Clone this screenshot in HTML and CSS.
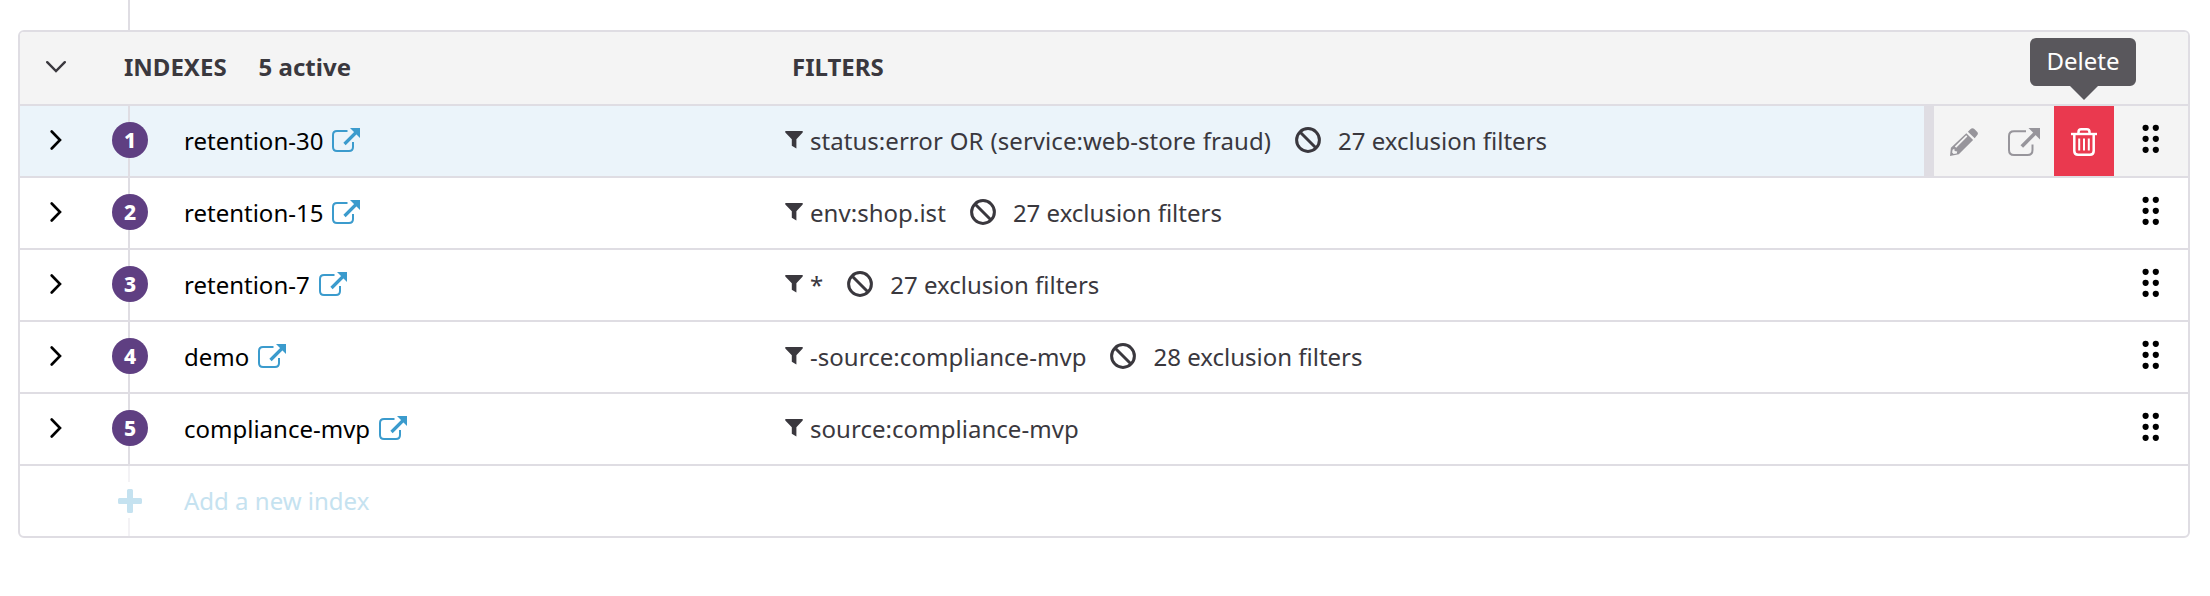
FILE: index.html
```html
<!DOCTYPE html>
<html lang="en">
<head>
<meta charset="utf-8">
<title>Indexes</title>
<link rel="stylesheet" href="styles.css">
</head>
<body>
<svg class="sprite" aria-hidden="true">
  <symbol id="chevron" viewBox="0 0 12 20"><path d="M1.700 1.500 10 10 1.700 18.500" fill="none" stroke="currentColor" stroke-width="2.600" stroke-linecap="round" stroke-linejoin="miter"/></symbol>
  <symbol id="chevron-down" viewBox="0 0 20 12"><path d="M1.200 1.200 10 10 18.800 1.200" fill="none" stroke="currentColor" stroke-width="2.400" stroke-linecap="round"/></symbol>
  <symbol id="external" viewBox="0 0 28 24"><path d="M15.500 3H5Q1 3 1 7V19Q1 23 5 23H17Q21 23 21 19V14" fill="none" stroke="currentColor" stroke-width="2"/><path d="M12.500 16 24 4.500" fill="none" stroke="currentColor" stroke-width="3.200"/><path d="M18 0H28V10Z" fill="currentColor"/></symbol>
  <symbol id="external-lg" viewBox="0 0 32 28"><path d="M18 3.200H6Q1 3.200 1 8V22Q1 27 6 27H19.500Q24.500 27 24.500 22V16.500" fill="none" stroke="currentColor" stroke-width="2"/><path d="M13.800 18.500 27 5.300" fill="none" stroke="currentColor" stroke-width="3.600"/><path d="M20.500 0H32V11.500Z" fill="currentColor"/></symbol>
  <symbol id="funnel" viewBox="0 0 18 18"><path d="M0.300 0H17.700V1.400L11.400 8.300V17.600L6.800 14.700V8.300L0.300 1.400Z" fill="currentColor"/></symbol>
  <symbol id="ban" viewBox="0 0 26 26"><circle cx="13" cy="13" r="11.400" fill="none" stroke="currentColor" stroke-width="3"/><path d="M5 5 21 21" stroke="currentColor" stroke-width="3"/></symbol>
  <symbol id="dots" viewBox="0 0 18 30"><g fill="currentColor"><circle cx="3.600" cy="3.800" r="3.100"/><circle cx="13.800" cy="3.800" r="3.100"/><circle cx="3.600" cy="14.800" r="3.100"/><circle cx="13.800" cy="14.800" r="3.100"/><circle cx="3.600" cy="25.800" r="3.100"/><circle cx="13.800" cy="25.800" r="3.100"/></g></symbol>
  <symbol id="pencil" viewBox="0 0 28 28"><path d="M17.900 3.800 20.400 1.300Q22.400-.7 24.600 1.200L26.800 3.400Q29 5.600 26.900 7.600L24.700 10.200Z" fill="currentColor"/><path fill-rule="evenodd" d="M16.300 5.200 23.100 11.900 8.800 26.300 0 28 .9 19.800ZM4.800 18.400 6.200 19.700 17.400 8.600 16.200 7.300ZM2.600 21.700 2.100 24.600 3.600 26 6.800 25.400 7.200 23.400 4.700 23.100 4.300 20.700Z" fill="currentColor"/></symbol>
  <symbol id="trash" viewBox="0 0 26 28"><g fill="none" stroke="currentColor"><path d="M0 6H26" stroke-width="2.400"/><path d="M7.500 6V4Q7.500 1.300 10.200 1.300H15.800Q18.500 1.300 18.500 4V6M3.300 6V23Q3.300 26.700 7 26.700H19Q22.700 26.700 22.700 23V6" stroke-width="2.500"/><path d="M8.200 10.500V22.500M13 10.500V22.500M17.800 10.500V22.500" stroke-width="2"/></g></symbol>
  <symbol id="plus" viewBox="0 0 24 24"><path d="M10.500 0H13.500Q15 0 15 1.500V9H22.500Q24 9 24 10.500V13.500Q24 15 22.500 15H15V22.500Q15 24 13.500 24H10.500Q9 24 9 22.500V15H1.500Q0 15 0 13.500V10.500Q0 9 1.500 9H9V1.500Q9 0 10.500 0Z" fill="currentColor"/></symbol>
</svg>

<div class="connector"></div>
<main class="panel">
  <header class="row head">
    <svg class="chevron-down"><use href="#chevron-down"/></svg>
    <div class="title"><span>INDEXES</span><span>5 active</span></div>
    <div class="filters-title">FILTERS</div>
  </header>

  <div class="row item selected">
    <svg class="chevron"><use href="#chevron"/></svg>
    <div class="order"><span class="badge">1</span></div>
    <div class="name">retention-30<svg class="external"><use href="#external"/></svg></div>
    <div class="filters"><svg class="funnel"><use href="#funnel"/></svg><span class="query">status:error OR (service:web-store fraud)</span><svg class="ban"><use href="#ban"/></svg><span>27 exclusion filters</span></div>
    <div class="actions">
      <button class="action"><svg class="pencil"><use href="#pencil"/></svg></button>
      <button class="action"><svg class="external-lg"><use href="#external-lg"/></svg></button>
      <button class="action delete"><svg class="trash"><use href="#trash"/></svg><span class="tooltip">Delete</span></button>
      <svg class="dots"><use href="#dots"/></svg>
    </div>
  </div>

  <div class="row item">
    <svg class="chevron"><use href="#chevron"/></svg>
    <div class="order"><span class="badge">2</span></div>
    <div class="name">retention-15<svg class="external"><use href="#external"/></svg></div>
    <div class="filters"><svg class="funnel"><use href="#funnel"/></svg><span class="query">env:shop.ist</span><svg class="ban"><use href="#ban"/></svg><span>27 exclusion filters</span></div>
    <svg class="dots"><use href="#dots"/></svg>
  </div>

  <div class="row item">
    <svg class="chevron"><use href="#chevron"/></svg>
    <div class="order"><span class="badge">3</span></div>
    <div class="name">retention-7<svg class="external"><use href="#external"/></svg></div>
    <div class="filters"><svg class="funnel"><use href="#funnel"/></svg><span class="query">*</span><svg class="ban"><use href="#ban"/></svg><span>27 exclusion filters</span></div>
    <svg class="dots"><use href="#dots"/></svg>
  </div>

  <div class="row item">
    <svg class="chevron"><use href="#chevron"/></svg>
    <div class="order"><span class="badge">4</span></div>
    <div class="name">demo<svg class="external"><use href="#external"/></svg></div>
    <div class="filters"><svg class="funnel"><use href="#funnel"/></svg><span class="query">-source:compliance-mvp</span><svg class="ban"><use href="#ban"/></svg><span>28 exclusion filters</span></div>
    <svg class="dots"><use href="#dots"/></svg>
  </div>

  <div class="row item">
    <svg class="chevron"><use href="#chevron"/></svg>
    <div class="order"><span class="badge">5</span></div>
    <div class="name">compliance-mvp<svg class="external"><use href="#external"/></svg></div>
    <div class="filters"><svg class="funnel"><use href="#funnel"/></svg><span class="query">source:compliance-mvp</span></div>
    <svg class="dots"><use href="#dots"/></svg>
  </div>

  <div class="row item add">
    <div class="order"><span class="add-icon"><svg class="plus"><use href="#plus"/></svg></span></div>
    <div class="name">Add a new index</div>
  </div>
</main>
</body>
</html>
```

FILE: styles.css
```css
* {
  box-sizing: border-box;
}

body {
  margin: 0;
  background: #fff;
  color: #3a383e;
  font: 24px/34px "Noto Sans", sans-serif;
}

svg {
  display: block;
  flex: none;
}

.sprite {
  display: none;
}

.connector {
  width: 2px;
  height: 30px;
  margin-left: 128px;
  background: #dfdde3;
}

.panel {
  width: 2172px;
  margin-left: 18px;
  border: 2px solid #dfdde3;
  border-radius: 6px;
}

.row {
  display: grid;
  grid-template-columns: 92px 72px 599px 1fr auto;
  height: 72px;
  border-bottom: 2px solid #dfdde3;
  white-space: nowrap;
}

.head {
  grid-template-columns: 104px 668px 1fr;
  height: 74px;
  background: #f4f4f4;
  border-radius: 4px 4px 0 0;
  font-weight: 700;
}

.title {
  display: flex;
  gap: 32px;
}

.title,
.filters-title {
  padding-top: 18px;
}

.chevron-down {
  width: 20px;
  height: 12px;
  margin: 29px 0 0 26px;
}

.chevron {
  width: 12px;
  height: 20px;
  margin: 24px 0 0 30px;
  color: #000;
}

.order {
  grid-column: 2;
  display: flex;
  align-items: flex-start;
  width: 36px;
  height: 70px;
  padding-top: 16px;
  background: linear-gradient(#dfdde3, #dfdde3) 16px 0 / 2px 100% no-repeat;
}

.badge {
  width: 36px;
  height: 36px;
  border-radius: 50%;
  background: #5f3f82;
  color: #fff;
  font-size: 21px;
  font-weight: 800;
  line-height: 36px;
  text-align: center;
}

.name {
  display: flex;
  padding-top: 18px;
  color: #000;
}

.external {
  width: 28px;
  height: 24px;
  margin: 4px 0 0 9px;
  color: #3b9bcd;
}

.filters {
  display: flex;
  padding: 18px 0 0 2px;
}

.query {
  letter-spacing: .04px;
  word-spacing: .7px;
}

.funnel {
  width: 18px;
  height: 18px;
  margin: 7px 7px 0 0;
}

.ban {
  width: 26px;
  height: 26px;
  margin: 3px 17px 0 24px;
}

.dots {
  width: 18px;
  height: 30px;
  margin: 18px 28px 0 0;
  color: #000;
}

.selected {
  background: #ebf4fa;
}

.actions {
  display: flex;
  width: 264px;
  height: 70px;
  border-left: 10px solid #dfdde3;
  background: #f4f4f4;
}

.actions .dots {
  margin: 18px 0 0 28px;
}

.action {
  position: relative;
  display: flex;
  justify-content: center;
  align-items: flex-start;
  width: 60px;
  height: 70px;
  padding: 22px 0 0;
  border: 0;
  background: none;
  color: #97959b;
  font: inherit;
}

.delete {
  background: #ea394f;
  color: #fff;
}

.pencil {
  width: 28px;
  height: 28px;
}

.external-lg {
  width: 32px;
  height: 28px;
}

.trash {
  width: 26px;
  height: 28px;
}

.tooltip {
  position: absolute;
  left: -24px;
  bottom: 90px;
  width: 106px;
  height: 48px;
  border-radius: 6px;
  background: #59575c;
  line-height: 46px;
  text-align: center;
}

.tooltip::after {
  content: "";
  position: absolute;
  top: 100%;
  left: 40px;
  border: 14px solid transparent;
  border-top-color: #59575c;
  border-bottom: 0;
}

.add {
  height: 70px;
  border-bottom: 0;
}

.add .order {
  background-image: linear-gradient(#f3f2f5, #f3f2f5);
}

.add .name {
  color: #c5e2f0;
}

.add-icon {
  padding: 7px 6px 5px;
  background: #fff;
}

.plus {
  width: 24px;
  height: 24px;
  color: #c5e2f0;
}
```
